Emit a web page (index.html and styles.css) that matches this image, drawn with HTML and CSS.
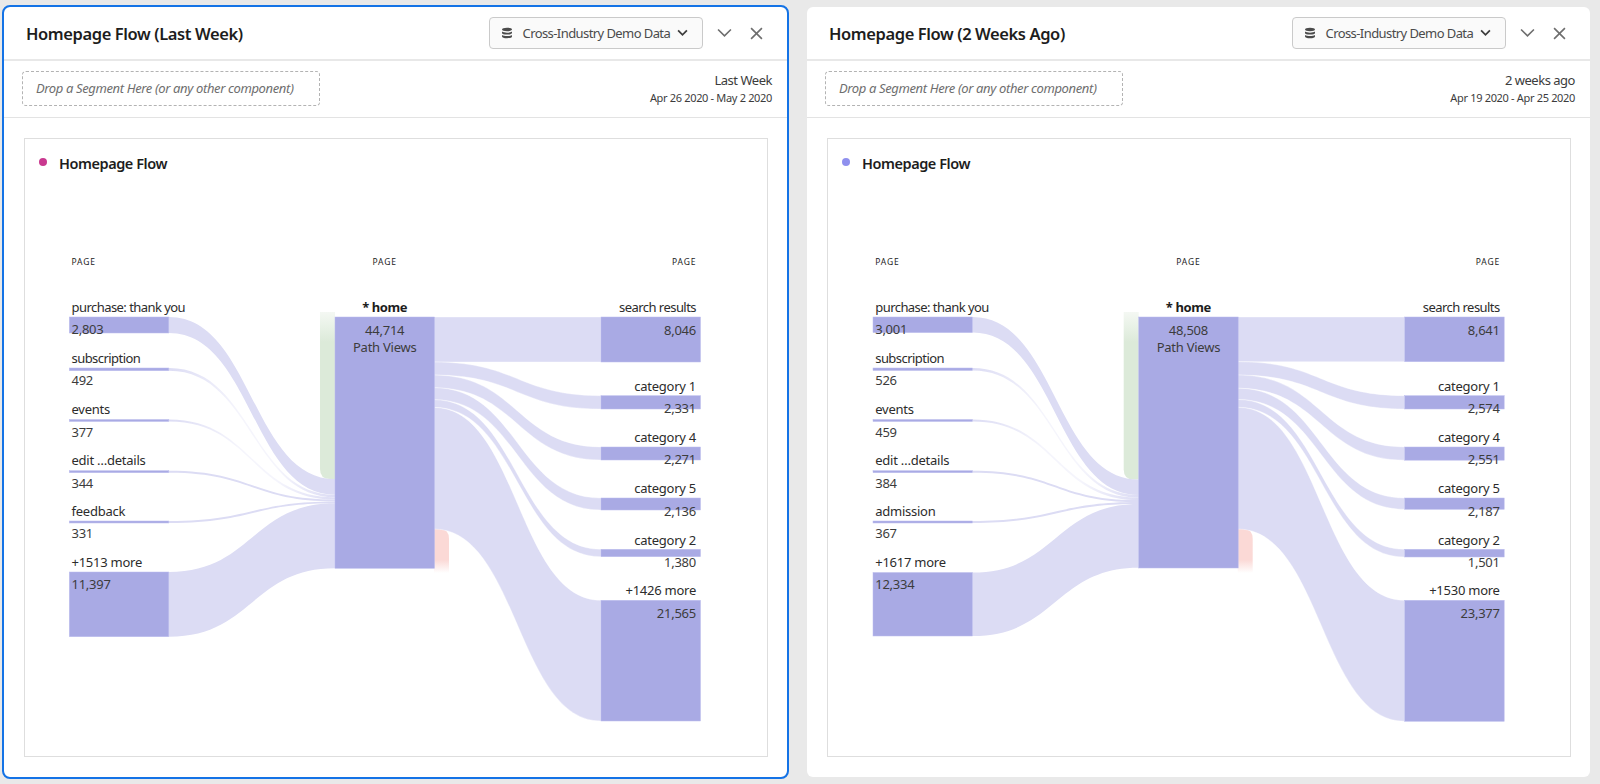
FILE: index.html
```html
<!DOCTYPE html>
<html lang="en">
<head>
<meta charset="utf-8">
<title>Homepage Flow</title>
<link rel="stylesheet" href="styles.css">
</head>
<body>
<svg class="defs" width="0" height="0" aria-hidden="true">
  <defs>
    <linearGradient id="green-fade" x1="0" y1="0" x2="0" y2="1">
      <stop offset="0" class="g0"/><stop offset="0.18" class="g1"/>
    </linearGradient>
    <linearGradient id="red-fade" x1="0" y1="0" x2="0" y2="1">
      <stop offset="0.7" class="r1"/><stop offset="1" class="r0"/>
    </linearGradient>
    <linearGradient id="thin-fade" x1="0" y1="0" x2="1" y2="0">
      <stop offset="0" class="t0"/><stop offset="0.42" class="t1"/><stop offset="0.65" class="t1"/><stop offset="1" class="t0"/>
    </linearGradient>
  </defs>
</svg>
<main class="page">
  <section class="panel panel-selected">
    <header class="panel-head">
      <h2 class="panel-title">Homepage Flow (Last Week)</h2>
      <div class="picker">
        <svg class="db" viewBox="0 0 12 12"><path d="M6 .8c3 0 5 .7 5 1.700S9 4.200 6 4.200 1 3.500 1 2.500 3 .8 6 .8zM1 4.600c1 .8 3 1.100 5 1.100s4-.3 5-1.100v1.300c0 1-2 1.700-5 1.700S1 6.900 1 5.900zM1 8c1 .8 3 1.100 5 1.100S10 8.800 11 8v1.400c0 1-2 1.800-5 1.800s-5-.8-5-1.800z"/></svg>
        <span class="picker-label">Cross-Industry Demo Data</span>
        <svg class="chev-small" viewBox="0 0 10 7"><path d="M1 1.200l4 4 4-4"/></svg>
      </div>
      <svg class="chev" viewBox="0 0 14 9"><path d="M1 1.200l6 6 6-6"/></svg>
      <svg class="close" viewBox="0 0 12 12"><path d="M1 1l10 10M11 1L1 11"/></svg>
    </header>
    <div class="panel-bar">
      <div class="dropzone">Drop a Segment Here (or any other component)</div>
      <div class="range"><div class="range-name">Last Week</div><div class="range-dates">Apr 26 2020 - May 2 2020</div></div>
    </div>
    <div class="panel-body">
      <article class="card">
        <div class="card-head"><span class="dot dot-pink"></span><h3 class="card-title">Homepage Flow</h3></div>
        <svg class="sankey" viewBox="25 200 742 556">
          <path class="green" d="M320 312H335V479H330Q320 479 320 469Z"/>
          <path class="red" d="M434 529H440Q449 529 449 539V573H434Z"/>
          <g class="flows">
            <path d="M169 317C252 317 252 479 335 479V494.700C252 494.700 252 333 169 333Z"/>
            <path class="thin" d="M169 368C252 368 252 494.700 335 494.700V497.400C252 497.400 252 370.700 169 370.700Z"/>
            <path class="thin" d="M169 419.500C252 419.500 252 497.400 335 497.400V499.500C252 499.500 252 421.500 169 421.500Z"/>
            <path d="M169 470.700C252 470.700 252 499.500 335 499.500V501.400C252 501.400 252 472.700 169 472.700Z"/>
            <path d="M169 521C252 521 252 501.400 335 501.400V503.300C252 503.300 252 523 169 523Z"/>
            <path d="M169 572C252 572 252 503.300 335 503.300V568.300C252 568.300 252 636.700 169 636.700Z"/>
          </g>
          <g class="flows flows-out">
            <path d="M434 317H601V362H434Z"/>
            <path d="M434 362C517.500 362 517.500 395.700 601 395.700V409C517.500 409 517.500 375 434 375Z"/>
            <path d="M434 375C517.500 375 517.500 447 601 447V460C517.500 460 517.500 387.700 434 387.700Z"/>
            <path d="M434 387.700C517.500 387.700 517.500 498 601 498V510C517.500 510 517.500 399.700 434 399.700Z"/>
            <path d="M434 399.700C517.500 399.700 517.500 549.300 601 549.300V556.700C517.500 556.700 517.500 407.400 434 407.400Z"/>
            <path d="M434 407.400C517.500 407.400 517.500 600.300 601 600.300V721C517.500 721 517.500 529 434 529Z"/>
          </g>
          <g class="nodes">
            <rect x="69.300" y="317" width="99.500" height="16"/>
            <rect x="69.300" y="368" width="99.500" height="2.700"/>
            <rect x="69.300" y="419.500" width="99.500" height="2"/>
            <rect x="69.300" y="470.700" width="99.500" height="2"/>
            <rect x="69.300" y="521" width="99.500" height="2"/>
            <rect x="69.300" y="572" width="99.500" height="64.700"/>
            <rect x="335" y="317" width="99.500" height="251.300"/>
            <rect x="601" y="317" width="99.500" height="45"/>
            <rect x="601" y="395.700" width="99.500" height="13.300"/>
            <rect x="601" y="447" width="99.500" height="13"/>
            <rect x="601" y="498" width="99.500" height="12"/>
            <rect x="601" y="549.300" width="99.500" height="7.400"/>
            <rect x="601" y="600.300" width="99.500" height="120.700"/>
          </g>
          <text class="axis" x="71.500" y="265">PAGE</text>
          <text class="axis mid" x="384.700" y="265">PAGE</text>
          <text class="axis end" x="696.500" y="265">PAGE</text>
          <g class="labels">
            <text class="tight" x="71.500" y="312">purchase: thank you</text><text class="val" x="71.500" y="334">2,803</text>
            <text class="tight" x="71.500" y="363">subscription</text><text class="val" x="71.500" y="385">492</text>
            <text x="71.500" y="414">events</text><text class="val" x="71.500" y="436.500">377</text>
            <text x="71.500" y="465">edit …details</text><text class="val" x="71.500" y="488">344</text>
            <text x="71.500" y="516">feedback</text><text class="val" x="71.500" y="538">331</text>
            <text x="71.500" y="567">+1513 more</text><text class="val" x="71.500" y="589">11,397</text>
          </g>
          <g class="labels mid">
            <text class="strong" x="384.700" y="312">* home</text>
            <text class="val" x="384.700" y="335">44,714</text>
            <text class="val" x="384.700" y="352">Path Views</text>
          </g>
          <g class="labels end">
            <text class="tight" x="696" y="312">search results</text><text class="val" x="696" y="335">8,046</text>
            <text x="696" y="391">category 1</text><text class="val" x="696" y="413">2,331</text>
            <text x="696" y="442">category 4</text><text class="val" x="696" y="464">2,271</text>
            <text x="696" y="493">category 5</text><text class="val" x="696" y="515.500">2,136</text>
            <text x="696" y="545">category 2</text><text class="val" x="696" y="566.500">1,380</text>
            <text x="696" y="595">+1426 more</text><text class="val" x="696" y="618">21,565</text>
          </g>
        </svg>
      </article>
    </div>
  </section>

  <section class="panel">
    <header class="panel-head">
      <h2 class="panel-title">Homepage Flow (2 Weeks Ago)</h2>
      <div class="picker">
        <svg class="db" viewBox="0 0 12 12"><path d="M6 .8c3 0 5 .7 5 1.700S9 4.200 6 4.200 1 3.500 1 2.500 3 .8 6 .8zM1 4.600c1 .8 3 1.100 5 1.100s4-.3 5-1.100v1.300c0 1-2 1.700-5 1.700S1 6.900 1 5.900zM1 8c1 .8 3 1.100 5 1.100S10 8.800 11 8v1.400c0 1-2 1.800-5 1.800s-5-.8-5-1.800z"/></svg>
        <span class="picker-label">Cross-Industry Demo Data</span>
        <svg class="chev-small" viewBox="0 0 10 7"><path d="M1 1.200l4 4 4-4"/></svg>
      </div>
      <svg class="chev" viewBox="0 0 14 9"><path d="M1 1.200l6 6 6-6"/></svg>
      <svg class="close" viewBox="0 0 12 12"><path d="M1 1l10 10M11 1L1 11"/></svg>
    </header>
    <div class="panel-bar">
      <div class="dropzone">Drop a Segment Here (or any other component)</div>
      <div class="range"><div class="range-name">2 weeks ago</div><div class="range-dates">Apr 19 2020 - Apr 25 2020</div></div>
    </div>
    <div class="panel-body">
      <article class="card">
        <div class="card-head"><span class="dot dot-violet"></span><h3 class="card-title">Homepage Flow</h3></div>
        <svg class="sankey" viewBox="24.300 200 742 556">
          <path class="green" d="M320 312H335V479.500H330Q320 479.500 320 469.500Z"/>
          <path class="red" d="M434 529H440Q449 529 449 539V573H434Z"/>
          <g class="flows">
            <path d="M169 317C252 317 252 479.500 335 479.500V495C252 495 252 332.600 169 332.600Z"/>
            <path class="thin" d="M169 368C252 368 252 495 335 495V497.700C252 497.700 252 370.500 169 370.500Z"/>
            <path class="thin" d="M169 419.500C252 419.500 252 497.700 335 497.700V500.100C252 500.100 252 421.500 169 421.500Z"/>
            <path d="M169 470.700C252 470.700 252 500.100 335 500.100V502.100C252 502.100 252 472.700 169 472.700Z"/>
            <path d="M169 521C252 521 252 502.100 335 502.100V504C252 504 252 523 169 523Z"/>
            <path d="M169 572.500C252 572.500 252 504 335 504V567.800C252 567.800 252 636 169 636Z"/>
          </g>
          <g class="flows flows-out">
            <path d="M434 317H601V361.700H434Z"/>
            <path d="M434 361.700C517.500 361.700 517.500 395.700 601 395.700V409C517.500 409 517.500 375 434 375Z"/>
            <path d="M434 375C517.500 375 517.500 447 601 447V460.200C517.500 460.200 517.500 388.200 434 388.200Z"/>
            <path d="M434 388.200C517.500 388.200 517.500 498 601 498V509.300C517.500 509.300 517.500 399.500 434 399.500Z"/>
            <path d="M434 399.500C517.500 399.500 517.500 549.300 601 549.300V557C517.500 557 517.500 407.300 434 407.300Z"/>
            <path d="M434 407.300C517.500 407.300 517.500 600.300 601 600.300V721.300C517.500 721.300 517.500 529 434 529Z"/>
          </g>
          <g class="nodes">
            <rect x="69.300" y="317" width="99.500" height="15.600"/>
            <rect x="69.300" y="368" width="99.500" height="2.500"/>
            <rect x="69.300" y="419.500" width="99.500" height="2"/>
            <rect x="69.300" y="470.700" width="99.500" height="2"/>
            <rect x="69.300" y="521" width="99.500" height="2"/>
            <rect x="69.300" y="572.500" width="99.500" height="63.500"/>
            <rect x="335" y="317" width="99.500" height="251"/>
            <rect x="601" y="317" width="99.500" height="44.700"/>
            <rect x="601" y="395.700" width="99.500" height="13.300"/>
            <rect x="601" y="447" width="99.500" height="13.200"/>
            <rect x="601" y="498" width="99.500" height="11.300"/>
            <rect x="601" y="549.300" width="99.500" height="7.700"/>
            <rect x="601" y="600.300" width="99.500" height="121"/>
          </g>
          <text class="axis" x="71.500" y="265">PAGE</text>
          <text class="axis mid" x="384.700" y="265">PAGE</text>
          <text class="axis end" x="696.500" y="265">PAGE</text>
          <g class="labels">
            <text class="tight" x="71.500" y="312">purchase: thank you</text><text class="val" x="71.500" y="334">3,001</text>
            <text class="tight" x="71.500" y="363">subscription</text><text class="val" x="71.500" y="385">526</text>
            <text x="71.500" y="414">events</text><text class="val" x="71.500" y="436.500">459</text>
            <text x="71.500" y="465">edit …details</text><text class="val" x="71.500" y="488">384</text>
            <text x="71.500" y="516">admission</text><text class="val" x="71.500" y="538">367</text>
            <text x="71.500" y="567">+1617 more</text><text class="val" x="71.500" y="589">12,334</text>
          </g>
          <g class="labels mid">
            <text class="strong" x="384.700" y="312">* home</text>
            <text class="val" x="384.700" y="335">48,508</text>
            <text class="val" x="384.700" y="352">Path Views</text>
          </g>
          <g class="labels end">
            <text class="tight" x="696" y="312">search results</text><text class="val" x="696" y="335">8,641</text>
            <text x="696" y="391">category 1</text><text class="val" x="696" y="413">2,574</text>
            <text x="696" y="442">category 4</text><text class="val" x="696" y="464">2,551</text>
            <text x="696" y="493">category 5</text><text class="val" x="696" y="515.500">2,187</text>
            <text x="696" y="545">category 2</text><text class="val" x="696" y="566.500">1,501</text>
            <text x="696" y="595">+1530 more</text><text class="val" x="696" y="618">23,377</text>
          </g>
        </svg>
      </article>
    </div>
  </section>
</main>
</body>
</html>
```

FILE: styles.css
```css
* { box-sizing: border-box; }
html, body { margin: 0; height: 100%; }
body {
  background: #e9e9e9;
  font-family: "Noto Sans", Lato, sans-serif;
  color: #2c2c2c;
  overflow: hidden;
}
.defs { position: absolute; }
.g0 { stop-color: #f4f8f3; }
.g1 { stop-color: #dcead9; }
.r0 { stop-color: #ffffff; }
.r1 { stop-color: #fbd9d6; }
.t0 { stop-color: #dcdcf4; }
.t1 { stop-color: #f5f5fc; }

.page {
  display: flex;
  gap: 16px;
  padding: 5px 0 0 2px;
}
.panel {
  width: 787px;
  height: 774px;
  flex: none;
  display: flex;
  flex-direction: column;
  background: #fff;
  background-clip: padding-box;
  border: 2px solid transparent;
  border-radius: 8px;
}
.panel-selected { border-color: #1473e6; }

.panel-head {
  height: 54px;
  flex: none;
  display: flex;
  align-items: center;
  padding: 0 24px 0 22px;
  border-bottom: 2px solid #e8e8e8;
}
.panel-title {
  margin: 0;
  flex: 1;
  font-size: 16.5px;
  font-weight: 600;
  letter-spacing: -.4px;
  color: #1d1d1d;
}
.picker {
  width: 214.5px;
  height: 32px;
  display: flex;
  align-items: center;
  padding: 0 14px 0 11px;
  background: #fafafa;
  border: 1px solid #cacaca;
  border-radius: 4px;
}
.db { width: 12px; height: 12px; fill: #4b4b4b; flex: none; }
.picker-label { flex: 1; margin-left: 10px; font-size: 13px; letter-spacing: -.58px; color: #4b4b4b; white-space: nowrap; }
.chev-small { width: 11px; height: 8px; fill: none; stroke: #3c3c3c; stroke-width: 1.6; flex: none; }
.chev { width: 15px; height: 10px; margin-left: 14px; fill: none; stroke: #6e6e6e; stroke-width: 1.5; flex: none; }
.close { width: 13px; height: 13px; margin-left: 18px; fill: none; stroke: #6e6e6e; stroke-width: 1.5; flex: none; }

.panel-bar {
  height: 57px;
  flex: none;
  display: flex;
  align-items: center;
  justify-content: space-between;
  padding: 0 15px 2px 18px;
  border-bottom: 1px solid #e3e3e3;
}
.dropzone {
  width: 298px;
  height: 35px;
  display: flex;
  align-items: center;
  padding-left: 13px;
  border: 1px dashed #b3b3b3;
  border-radius: 4px;
  font-size: 13px;
  letter-spacing: -.37px;
  font-style: italic;
  color: #6e6e6e;
}
.range { text-align: right; }
.range-name { font-size: 13px; letter-spacing: -.48px; line-height: 18px; color: #3c3c3c; }
.range-dates { font-size: 11px; letter-spacing: -.33px; line-height: 17px; color: #3c3c3c; }

.panel-body {
  flex: 1;
  padding: 20px 19px 20px 20px;
  min-height: 0;
}
.card {
  height: 100%;
  border: 1px solid #dedede;
}
.card-head {
  height: 61px;
  display: flex;
  align-items: flex-start;
  padding: 14px 0 0 14px;
}
.dot { width: 8px; height: 8px; border-radius: 50%; margin-top: 5px; flex: none; }
.dot-pink { background: #c9398f; }
.dot-violet { background: #8f90ee; }
.card-title { margin: 0 0 0 12px; font-size: 14.5px; line-height: 20px; font-weight: 600; letter-spacing: -.44px; color: #1d1d1d; }
.sankey { display: block; width: 742px; height: 556px; }

.green { fill: url(#green-fade); }
.red { fill: url(#red-fade); }
.flows path { fill: #dcdcf4; }
.flows path.thin { fill: url(#thin-fade); }
.flows-out path { stroke: #fff; stroke-width: .35; }
.nodes rect { fill: #a9aae4; stroke: #bcbdee; stroke-width: .5; }
.axis { font-size: 8.5px; letter-spacing: .9px; fill: #1d1d1d; }
.axis.mid { text-anchor: middle; }
.axis.end { text-anchor: end; }
.labels text { font-size: 13px; letter-spacing: -.25px; fill: #2c2c2c; }
.labels text.tight { letter-spacing: -.55px; }
.labels.mid text { text-anchor: middle; }
.labels.end text { text-anchor: end; }
.labels .val { fill: #3c3c3c; }
.labels .strong { font-weight: 700; letter-spacing: -.4px; fill: #1d1d1d; }
```
